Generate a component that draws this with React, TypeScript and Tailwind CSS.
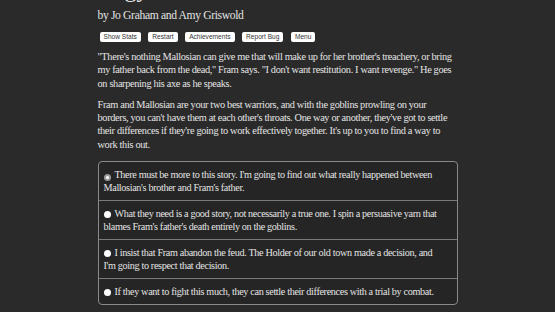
const buttons = ["Show Stats", "Restart", "Achievements", "Report Bug", "Menu"]

const paragraphs = [
  [
    "\"There's nothing Mallosian can give me that will make up for her brother's treachery, or bring",
    "my father back from the dead,\" Fram says. \"I don't want restitution. I want revenge.\" He goes",
    "on sharpening his axe as he speaks.",
  ],
  [
    "Fram and Mallosian are your two best warriors, and with the goblins prowling on your",
    "borders, you can't have them at each other's throats. One way or another, they've got to settle",
    "their differences if they're going to work effectively together. It's up to you to find a way to",
    "work this out.",
  ],
]

const options = [
  {
    lines: [
      "There must be more to this story. I'm going to find out what really happened between",
      "Mallosian's brother and Fram's father.",
    ],
    checked: true,
  },
  {
    lines: [
      "What they need is a good story, not necessarily a true one. I spin a persuasive yarn that",
      "blames Fram's father's death entirely on the goblins.",
    ],
    checked: false,
  },
  {
    lines: [
      "I insist that Fram abandon the feud. The Holder of our old town made a decision, and",
      "I'm going to respect that decision.",
    ],
    checked: false,
  },
  {
    lines: ["If they want to fight this much, they can settle their differences with a trial by combat."],
    checked: false,
  },
]

export default function App() {
  return (
    <div className="h-[312px] w-[555px] overflow-hidden bg-[#2a2a2a] text-[#e4e4e4] [font-family:'Liberation_Serif',serif]">
      <div className="mx-auto w-[360px]">
        <h1 className="-mt-[25px] h-[28px] pl-[27px] text-[24px] leading-[28px] text-[#e8e8e8]">gy</h1>
        <div className="mt-[5px] text-[11.6px] leading-[16px] tracking-[-0.35px]">by Jo Graham and Amy Griswold</div>

        <div className="mt-[8px] flex gap-[7.5px] pl-[2px] [font-family:'Liberation_Sans',sans-serif]">
          {buttons.map((b) => (
            <span
              key={b}
              className="rounded-[2px] bg-white px-[4px] text-[6.6px] leading-[10px] text-[#333]"
            >
              {b}
            </span>
          ))}
        </div>

        <div className="mt-[8px] text-[10.35px] leading-[13.3px] tracking-[-0.35px]">
          {paragraphs.map((p, i) => (
            <p key={i} className={i > 0 ? "mt-[8px]" : ""}>
              {p.map((line) => (
                <span key={line} className="block whitespace-nowrap">
                  {line}
                </span>
              ))}
            </p>
          ))}
        </div>

        <div className="mt-[10px] overflow-hidden rounded-[4px] border border-[#8a8a8a] bg-[#252525] text-[10.2px] leading-[13px] tracking-[-0.35px]">
          {options.map((o, i) => (
            <div key={i} className={`px-[5px] py-[6px] ${i > 0 ? "border-t border-[#7a7a7a]" : ""}`}>
              {o.lines.map((line, j) => (
                <span key={j} className="block whitespace-nowrap">
                  {j === 0 &&
                    (o.checked ? (
                      <span className="mr-[4px] inline-flex h-[7px] w-[7px] items-center justify-center rounded-full bg-[#9a9a9a] align-[-0.5px]">
                        <span className="h-[3px] w-[3px] rounded-full bg-white" />
                      </span>
                    ) : (
                      <span className="mr-[4px] inline-block h-[7px] w-[7px] rounded-full bg-white align-[-0.5px]" />
                    ))}
                  {line}
                </span>
              ))}
            </div>
          ))}
        </div>
      </div>
    </div>
  )
}
